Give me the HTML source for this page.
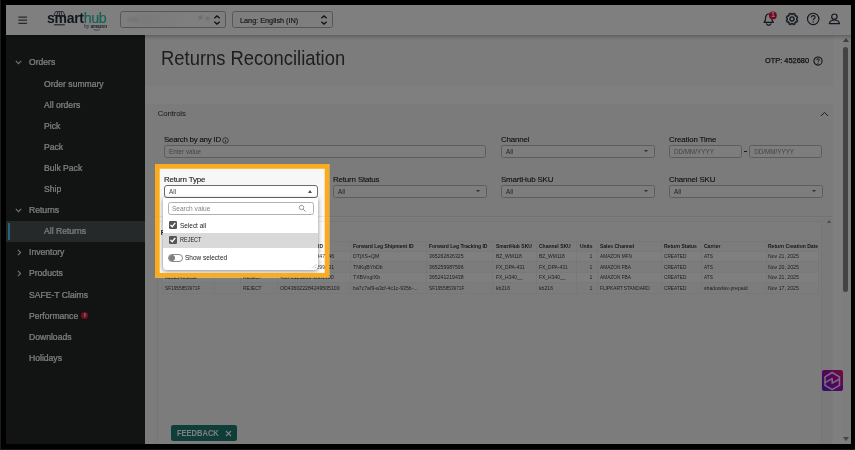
<!DOCTYPE html>
<html lang="en">
<head>
<meta charset="utf-8">
<title>Returns Reconciliation - SmartHub</title>
<style>
*{box-sizing:border-box;margin:0;padding:0}
html,body{width:855px;height:450px;background:#000;overflow:hidden}
body{position:relative;font-family:"Liberation Sans",sans-serif;color:#333;-webkit-font-smoothing:antialiased}
.screen{position:absolute;left:6px;top:5px;width:845px;height:439px;overflow:hidden;background:#fdfdfd}
.page{position:absolute;left:-6px;top:-5px;width:855px;height:450px;will-change:transform}
.abs{position:absolute}
.t{position:absolute;white-space:nowrap;line-height:1}

/* header */
.topbar{position:absolute;left:0;top:0;width:855px;height:34.5px;background:#fff;box-shadow:0 1px 4.500px rgba(0,0,0,.34);z-index:5}
.hsel{position:absolute;top:11px;height:17.3px;border:1px solid #adadad;border-radius:2.5px;background:#fdfdfd;overflow:hidden}
.hsel .t{font-size:7.5px;color:#2a2a2a;top:4.7px;left:6.2px;transform:scaleX(.97);transform-origin:0 50%;-webkit-text-stroke:.15px #2a2a2a}

/* sidebar */
.side{position:absolute;left:6px;top:34.5px;width:139px;height:410px;background:#252928;z-index:4}
.side .t{font-size:9.2px;color:#fbfbfb;transform:scaleX(.935);transform-origin:0 50%;margin-top:.1px;-webkit-text-stroke:.22px #fbfbfb}
.sel{position:absolute;left:0;top:186.7px;width:139px;height:20.5px;background:#4a5253}
.sel i{position:absolute;left:2px;top:1.6px;width:2.2px;height:16.8px;background:#46cdf5}

/* main */
.titlebar{position:absolute;left:145px;top:34.5px;width:697px;height:51.5px;background:#f8f8f8}
.h1{font-size:19.7px;color:#3c3c3c;left:161.4px;top:49.2px;transform:scaleX(.935);transform-origin:0 50%}
.card{position:absolute;background:#f5f5f5}
.lbl{font-size:7.9px;color:#262626;letter-spacing:-.14px;-webkit-text-stroke:.13px #262626}
.inp{position:absolute;height:12.4px;border:1px solid #b8b8b8;border-radius:2.5px;background:#fafafa}
.inp .t{font-size:6.3px;color:#444;left:4.4px;top:2.4px}
.inp .ph{color:#8a8a8a}
.arr{position:absolute;right:5.6px;top:4.1px;width:0;height:0;border-left:2.3px solid transparent;border-right:2.3px solid transparent;border-top:2.8px solid #555}

/* table */
.tbl{position:absolute;left:161.5px;top:240.6px;width:657px;height:53.3px;background:#f9f9f9;border:1px solid #f1f1f1}
.row{position:absolute;left:0;width:655px;height:10.55px}
.row{background:#f9f9f9;border-top:1px solid #f3f3f3}
.row.alt{background:#fff}
.td.uc{transform:scaleX(.85)}
.vl{position:absolute;top:0;width:1px;height:51px;background:#f1f1f1}
.th{font-size:5.6px;font-weight:bold;color:#2c2c2c;transform:scaleX(.895);transform-origin:0 50%}
.td{font-size:5.6px;color:#3c3c3c;transform:scaleX(.925);transform-origin:0 50%}

/* dropdown */
.dd{position:absolute;left:163.4px;top:198.4px;width:154.2px;height:71.4px;background:#fff;border-radius:0 0 4px 4px;box-shadow:0 1px 4px rgba(0,0,0,.45);z-index:8}
.cb{position:absolute;width:7.8px;height:7.6px;background:#555;border-radius:1.2px}
.cb svg{position:absolute;left:0;top:0}
.ddt{font-size:7.2px;color:#222;transform:scaleX(.895);transform-origin:0 50%}

/* spotlight */
.spot{position:absolute;left:155px;top:164px;width:174.4px;height:113.6px;border:4.7px solid #fbab1e;box-shadow:0 0 0 2000px rgba(0,0,0,.5);z-index:20;pointer-events:none}
</style>
</head>
<body>
<div class="abs" style="left:0;top:0;width:1px;height:450px;background:#1c1c1c"></div><div class="abs" style="left:0;top:449px;width:855px;height:1px;background:#191919"></div>
<div class="screen"><div class="page">

<!-- ===== top bar ===== -->
<div class="topbar">
  <svg class="abs" style="left:17.8px;top:15.6px" width="10" height="9" viewBox="0 0 10 9"><g stroke="#4b5260" stroke-width="1.25"><path d="M.4 1.1h8.7M.4 4.2h8.7M.4 7.3h8.7"/></g></svg>
  <!-- logo -->
  <div class="t" style="left:47px;top:11.200px;font-size:14px;font-weight:bold;color:#232f3e;letter-spacing:-.28px">smart</div>
  <div class="t" style="left:83.800px;top:11px;font-size:14.300px;color:#2cc4ac;letter-spacing:-.42px;-webkit-text-stroke:.2px #2cc4ac">hub</div>
  <svg class="abs" style="left:52px;top:9.500px" width="16" height="17" viewBox="0 0 16 17"><path d="M3.600 1.600h7.600l1.800 3.900H1.800zM5.700 1.600l-.8 3.900M9.100 1.600l.8 3.900M7.400 1.600v3.900" fill="none" stroke="#232f3e" stroke-width=".75" stroke-linejoin="round"/><path d="M2 14.800h10.800" stroke="#232f3e" stroke-width="1"/></svg>
  <div class="t" style="left:84.200px;top:24.800px;font-size:4.700px;color:#3a4352">by <b style="letter-spacing:-.150px">amazon</b></div>
  <svg class="abs" style="left:92.500px;top:28.900px" width="12" height="3" viewBox="0 0 12 3"><path d="M.5.400C2.500 1.500 5 1.500 6.800.5" fill="none" stroke="#3a4352" stroke-width=".6"/></svg>

  <div class="hsel" style="left:120.3px;width:105.6px">
    <div class="abs" style="left:3px;top:2px;width:86px;height:11px;background:linear-gradient(90deg,#fff,#f6f3f3 25%,#fbfbfb 55%,#fff 80%);filter:blur(1.200px)"></div>
    <div class="abs" style="left:72px;top:2.500px;width:17px;height:10px;border-radius:5px;background:#fff;box-shadow:0 0 3px 2px #fff;opacity:.9"></div>
    <div class="abs" style="left:6px;top:5.500px;width:11px;height:3.500px;background:#e6e6e6;filter:blur(1.400px)"></div>
    <div class="abs" style="left:78px;top:4px;width:3px;height:3px;background:#c4c4c4;filter:blur(1px)"></div>
    <div class="abs" style="left:84.500px;top:5px;width:3px;height:2.500px;background:#d0d0d0;filter:blur(1px)"></div>
    <svg class="abs" style="left:91.6px;top:2.9px" width="8" height="10" viewBox="0 0 8 10"><path d="M1.3 3.2L4 .9l2.7 2.3M1.3 6.8L4 9.1l2.7-2.3" fill="none" stroke="#222" stroke-width="1.300"/></svg>
  </div>
  <div class="hsel" style="left:232.4px;width:100.8px">
    <div class="t">Lang: English (IN)</div>
    <svg class="abs" style="left:86.7px;top:2.9px" width="8" height="10" viewBox="0 0 8 10"><path d="M1.3 3.2L4 .9l2.7 2.3M1.3 6.8L4 9.1l2.7-2.3" fill="none" stroke="#222" stroke-width="1.300"/></svg>
  </div>

  <!-- right icons -->
  <svg class="abs" style="left:761px;top:11px" width="18" height="16" viewBox="0 0 18 16"><g fill="none" stroke="#232f3e" stroke-width="1.200" stroke-linejoin="round" stroke-linecap="round"><path d="M3.100 11.300c1.200-1 1.500-2.200 1.500-4.200 0-2.400 1.300-4.100 3.100-4.100s3.100 1.700 3.100 4.100c0 2 .3 3.200 1.500 4.200z"/><path d="M5.600 12.900c.4.900 1.200 1.300 2.100 1.300s1.700-.4 2.100-1.300"/></g><circle cx="11.900" cy="4.400" r="3.900" fill="#e6143e"/></svg>
  <div class="t" style="left:771.200px;top:12.300px;font-size:6.300px;font-weight:bold;color:#fff">1</div>
  <svg class="abs" style="left:785.100px;top:12.100px" width="14" height="14" viewBox="0 0 14 14"><g fill="none" stroke="#232f3e" stroke-width="1.300" stroke-linejoin="round"><path d="M7.70 2.30L8.24 1.39L10.09 2.15L9.83 3.18L10.82 4.17L11.85 3.91L12.61 5.76L11.70 6.30L11.70 7.70L12.61 8.24L11.85 10.09L10.82 9.83L9.83 10.82L10.09 11.85L8.24 12.61L7.70 11.70L6.30 11.70L5.76 12.61L3.91 11.85L4.17 10.82L3.18 9.83L2.15 10.09L1.39 8.24L2.30 7.70L2.30 6.30L1.39 5.76L2.15 3.91L3.18 4.17L4.17 3.18L3.91 2.15L5.76 1.39L6.30 2.30Z"/><circle cx="7" cy="7" r="2.050"/></g></svg>
  <svg class="abs" style="left:806px;top:12px" width="14" height="14" viewBox="0 0 14 14"><circle cx="7.200" cy="6.900" r="5.700" fill="none" stroke="#232f3e" stroke-width="1.15"/><path d="M5.300 5.400c0-1.100.8-1.800 1.900-1.800s1.900.7 1.900 1.700c0 1.500-1.900 1.500-1.900 3" fill="none" stroke="#232f3e" stroke-width="1.1"/><circle cx="7.200" cy="10" r=".7" fill="#232f3e"/></svg>
  <svg class="abs" style="left:827px;top:12px" width="14" height="14" viewBox="0 0 14 14"><g fill="none" stroke="#232f3e" stroke-width="1.2" stroke-linejoin="round"><circle cx="7.400" cy="4.700" r="2.700"/><path d="M2.300 11.600c.5-2.400 2.600-3.600 5.100-3.600s4.600 1.200 5.100 3.600z"/></g></svg>
</div>

<!-- ===== sidebar ===== -->
<div class="side">
  <div class="sel"><i></i></div>
  <svg class="abs" style="left:9px;top:25.7px" width="7" height="5" viewBox="0 0 7 5"><path d="M.8.900L3.500 3.600 6.200.9" fill="none" stroke="#e8e8e8" stroke-width="1.100"/></svg>
  <div class="t" style="left:23.3px;top:23.9px">Orders</div>
  <div class="t" style="left:38px;top:45px">Order summary</div>
  <div class="t" style="left:38px;top:66.1px">All orders</div>
  <div class="t" style="left:38px;top:87.2px">Pick</div>
  <div class="t" style="left:38px;top:108.3px">Pack</div>
  <div class="t" style="left:38px;top:129.4px">Bulk Pack</div>
  <div class="t" style="left:38px;top:150.5px">Ship</div>
  <svg class="abs" style="left:9px;top:173.4px" width="7" height="5" viewBox="0 0 7 5"><path d="M.8.900L3.500 3.600 6.200.9" fill="none" stroke="#e8e8e8" stroke-width="1.100"/></svg>
  <div class="t" style="left:23.3px;top:171.6px">Returns</div>
  <div class="t" style="left:38px;top:192.7px">All Returns</div>
  <svg class="abs" style="left:10.500px;top:214.500px" width="5" height="7" viewBox="0 0 5 7"><path d="M.9.800L3.600 3.500.9 6.200" fill="none" stroke="#e8e8e8" stroke-width="1.100"/></svg>
  <div class="t" style="left:23.3px;top:213.800px">Inventory</div>
  <svg class="abs" style="left:10.500px;top:235.600px" width="5" height="7" viewBox="0 0 5 7"><path d="M.9.800L3.600 3.500.9 6.200" fill="none" stroke="#e8e8e8" stroke-width="1.100"/></svg>
  <div class="t" style="left:23.3px;top:234.900px">Products</div>
  <div class="t" style="left:23.3px;top:256px">SAFE-T Claims</div>
  <div class="t" style="left:23.3px;top:277.100px">Performance</div>
  <div class="abs" style="left:75.200px;top:277.600px;width:7px;height:7px;border-radius:50%;background:#e01d45"></div>
  <div class="t" style="left:77.900px;top:278.500px;font-size:5.500px;font-weight:bold;color:#fff">!</div>
  <div class="t" style="left:23.3px;top:298.200px">Downloads</div>
  <div class="t" style="left:23.3px;top:319.300px">Holidays</div>
</div>

<!-- ===== main ===== -->
<div class="abs" style="left:145px;top:34.5px;width:706px;height:410px;background:#f9f9f9"></div>
<div class="titlebar"></div>
<div class="abs" style="left:145px;top:86px;width:697px;height:17.600px;background:#fefefe"></div>
<div class="t h1">Returns Reconciliation</div>
<div class="t" style="left:765.300px;top:57.200px;font-size:7.800px;color:#222;-webkit-text-stroke:.25px #222;transform:scaleX(.95);transform-origin:0 50%">OTP: 452680</div>
<svg class="abs" style="left:812.600px;top:55.800px" width="10" height="10" viewBox="0 0 10 10"><circle cx="5" cy="5" r="4.100" fill="none" stroke="#222" stroke-width="1.050"/><path d="M3.700 4c0-.8.600-1.300 1.300-1.300s1.300.5 1.300 1.200c0 1-1.300 1-1.300 2" fill="none" stroke="#222" stroke-width=".95"/><circle cx="5" cy="7.300" r=".6" fill="#222"/></svg>

<!-- right scroll area -->
<div class="abs" style="left:832.500px;top:34.500px;width:9.500px;height:410px;background:#fefefe"></div>
<div class="abs" style="left:842px;top:34.500px;width:9px;height:410px;background:#fbfbfb"></div>
<div class="abs" style="left:843.300px;top:46.700px;width:5.100px;height:245.300px;border-radius:2.600px;background:#868686"></div>
<div class="abs" style="left:843px;top:37.900px;width:0;height:0;border-left:3px solid transparent;border-right:3px solid transparent;border-bottom:4.400px solid #7c7c7c;z-index:6"></div>
<div class="abs" style="left:843px;top:437.200px;width:0;height:0;border-left:3px solid transparent;border-right:3px solid transparent;border-top:4px solid #8a8a8a"></div>

<!-- controls card -->
<div class="card" style="left:153.300px;top:103.600px;width:679.200px;height:113.700px;background:#f7f7f7;border-bottom:1px solid #e4e4e4"></div>
<div class="t lbl" style="left:157.800px;top:109.600px;font-size:7.800px;-webkit-text-stroke:0;color:#303030">Controls</div>
<svg class="abs" style="left:819.800px;top:110.800px" width="9" height="6" viewBox="0 0 9 6"><path d="M.9 5L4.500 1.400 8.100 5" fill="none" stroke="#3a3a3a" stroke-width="1"/></svg>

<div class="t lbl" style="left:164px;top:135.800px;letter-spacing:-.23px">Search by any ID</div>
<svg class="abs" style="left:222.300px;top:136.600px" width="7" height="7" viewBox="0 0 7 7"><circle cx="3.500" cy="3.500" r="2.800" fill="none" stroke="#333" stroke-width=".7"/><path d="M3.500 3.100v2" stroke="#333" stroke-width=".8"/><circle cx="3.500" cy="2.100" r=".45" fill="#333"/></svg>
<div class="inp" style="left:163.700px;top:145.400px;width:322.800px"><div class="t ph">Enter value</div></div>

<div class="t lbl" style="left:501px;top:135.800px">Channel</div>
<div class="inp" style="left:500.600px;top:145.400px;width:154px"><div class="t">All</div><div class="arr"></div></div>

<div class="t lbl" style="left:669px;top:135.800px">Creation Time</div>
<div class="inp" style="left:668.600px;top:145.400px;width:73.700px"><div class="t ph">DD/MM/YYYY</div></div>
<div class="abs" style="left:744.400px;top:151.200px;width:3px;height:.9px;background:#333"></div>
<div class="inp" style="left:748.800px;top:145.400px;width:73.700px"><div class="t ph">DD/MM/YYYY</div></div>

<div class="t lbl" style="left:164px;top:175.600px">Return Type</div>
<div class="inp" style="left:163.700px;top:185.400px;width:154px;height:13px;background:#fff;border-color:#6a6a6a;border-radius:3px"><div class="t" style="top:2.700px">All</div><div class="arr" style="border-top:0;border-left-width:2.500px;border-right-width:2.500px;border-bottom:3.100px solid #505050;top:3.900px;right:5.200px"></div></div>

<div class="t lbl" style="left:333px;top:175.600px">Return Status</div>
<div class="inp" style="left:332.600px;top:185.400px;width:154px;height:12.900px"><div class="t">All</div><div class="arr"></div></div>

<div class="t lbl" style="left:501px;top:175.600px">SmartHub SKU</div>
<div class="inp" style="left:500.600px;top:185.400px;width:154px;height:12.900px"><div class="t">All</div><div class="arr"></div></div>

<div class="t lbl" style="left:669px;top:175.600px">Channel SKU</div>
<div class="inp" style="left:668.600px;top:185.400px;width:154px;height:12.900px"><div class="t">All</div><div class="arr"></div></div>

<!-- table card -->
<div class="card" style="left:153.300px;top:218.300px;width:679.200px;height:226px;background:#f7f7f7"></div>
<div class="card" style="left:157.300px;top:220.800px;width:665px;height:224px;background:#f9f9f9;border:1px solid #ececec;border-bottom:0"></div>
<div class="abs" style="left:822.300px;top:218.300px;width:10.200px;height:226px;background:#f4f4f4"></div>
<div class="abs" style="left:827.300px;top:219.700px;width:0;height:0;border-left:2.300px solid transparent;border-right:2.300px solid transparent;border-bottom:3.300px solid #999"></div>
<div class="t" style="left:160.700px;top:229.500px;font-size:6.600px;font-weight:bold;color:#222">Returns</div>

<div class="tbl">
  <div class="row alt" style="top:9.100px"></div>
  <div class="row" style="top:19.650px"></div>
  <div class="row alt" style="top:30.200px"></div>
  <div class="row" style="top:40.750px"></div>
  <div class="vl" style="left:51.600px"></div><div class="vl" style="left:77.600px"></div><div class="vl" style="left:114.300px"></div><div class="vl" style="left:187.800px"></div><div class="vl" style="left:263.400px"></div><div class="vl" style="left:329.500px"></div><div class="vl" style="left:373px"></div><div class="vl" style="left:413.400px"></div><div class="vl" style="left:434px"></div><div class="vl" style="left:498px"></div><div class="vl" style="left:538.500px"></div><div class="vl" style="left:603px"></div>
</div>
<!-- table text -->
<div class="t th" style="left:164.5px;top:243.95px">Return ID</div>
<div class="t th" style="left:216.5px;top:243.95px">Qty</div>
<div class="t th" style="left:242.9px;top:243.95px">Return Type</div>
<div class="t th" style="right:532.300px;transform-origin:100% 50%;top:243.95px">Customer Order ID</div>
<div class="t th" style="left:353.4px;top:243.95px">Forward Leg Shipment ID</div>
<div class="t th" style="left:429.2px;top:243.95px">Forward Leg Tracking ID</div>
<div class="t th" style="left:495.5px;top:243.95px">SmartHub SKU</div>
<div class="t th" style="left:539.0px;top:243.95px">Channel SKU</div>
<div class="t th" style="left:580.0px;top:243.95px">Units</div>
<div class="t th" style="left:599.8px;top:243.95px">Sales Channel</div>
<div class="t th" style="left:663.9px;top:243.95px">Return Status</div>
<div class="t th" style="left:704.3px;top:243.95px">Carrier</div>
<div class="t th" style="left:768.1px;top:243.95px">Return Creation Date</div>
<div class="t td" style="left:164.5px;top:254.01px">82531907462</div>
<div class="t td uc" style="left:242.9px;top:254.01px">REJECT</div>
<div class="t td" style="left:279.8px;top:254.01px;transform:scaleX(.957)">408-7261945-3847146</div>
<div class="t td" style="left:353.4px;top:254.01px">DTjXS+QM</div>
<div class="t td" style="left:429.2px;top:254.01px">365262826325</div>
<div class="t td" style="left:495.5px;top:254.01px;transform:scaleX(.885)">BZ_WM118</div>
<div class="t td" style="left:539.0px;top:254.01px;transform:scaleX(.885)">BZ_WM118</div>
<div class="t td" style="left:580.0px;width:12.3px;text-align:right;transform-origin:100% 50%;top:254.01px">1</div>
<div class="t td uc" style="left:599.8px;top:254.01px">AMAZON MFN</div>
<div class="t td uc" style="left:663.9px;top:254.01px">CREATED</div>
<div class="t td uc" style="left:704.3px;top:254.01px">ATS</div>
<div class="t td" style="left:768.1px;top:254.01px">Nov 21, 2025</div>
<div class="t td" style="left:164.5px;top:264.61px">82528816074</div>
<div class="t td uc" style="left:242.9px;top:264.61px">REJECT</div>
<div class="t td" style="left:279.8px;top:264.61px;transform:scaleX(.957)">171-5820364-1299531</div>
<div class="t td" style="left:353.4px;top:264.61px">TNKqBYhDb</div>
<div class="t td" style="left:429.2px;top:264.61px">365259987596</div>
<div class="t td" style="left:495.5px;top:264.61px;transform:scaleX(.885)">FX_DPA-431</div>
<div class="t td" style="left:539.0px;top:264.61px;transform:scaleX(.885)">FX_DPA-431</div>
<div class="t td" style="left:580.0px;width:12.3px;text-align:right;transform-origin:100% 50%;top:264.61px">1</div>
<div class="t td uc" style="left:599.8px;top:264.61px">AMAZON FBA</div>
<div class="t td uc" style="left:663.9px;top:264.61px">CREATED</div>
<div class="t td uc" style="left:704.3px;top:264.61px">ATS</div>
<div class="t td" style="left:768.1px;top:264.61px">Nov 20, 2025</div>
<div class="t td" style="left:164.5px;top:275.21px">82525435658</div>
<div class="t td uc" style="left:242.9px;top:275.21px">REJECT</div>
<div class="t td" style="left:279.8px;top:275.21px;transform:scaleX(.957)">408-3115283-3881300</div>
<div class="t td" style="left:353.4px;top:275.21px">TXBVngIXb</div>
<div class="t td" style="left:429.2px;top:275.21px">365241219438</div>
<div class="t td" style="left:495.5px;top:275.21px;transform:scaleX(.885)">FX_H340__</div>
<div class="t td" style="left:539.0px;top:275.21px;transform:scaleX(.885)">FX_H340__</div>
<div class="t td" style="left:580.0px;width:12.3px;text-align:right;transform-origin:100% 50%;top:275.21px">1</div>
<div class="t td uc" style="left:599.8px;top:275.21px">AMAZON FBA</div>
<div class="t td uc" style="left:663.9px;top:275.21px">CREATED</div>
<div class="t td uc" style="left:704.3px;top:275.21px">ATS</div>
<div class="t td" style="left:768.1px;top:275.21px">Nov 21, 2025</div>
<div class="t td uc" style="left:164.5px;top:285.71px">SF1955853971F</div>
<div class="t td uc" style="left:242.9px;top:285.71px">REJECT</div>
<div class="t td" style="left:279.8px;top:285.71px">OD436022284249505100</div>
<div class="t td" style="left:353.4px;top:285.71px">ba7c7af9-a3cf-4c1c-935b-...</div>
<div class="t td uc" style="left:429.2px;top:285.71px">SF1955853971F</div>
<div class="t td" style="left:495.5px;top:285.71px">kb216</div>
<div class="t td" style="left:539.0px;top:285.71px">kb216</div>
<div class="t td" style="left:580.0px;width:12.3px;text-align:right;transform-origin:100% 50%;top:285.71px">1</div>
<div class="t td uc" style="left:599.8px;top:285.71px">FLIPKART STANDARD</div>
<div class="t td uc" style="left:663.9px;top:285.71px">CREATED</div>
<div class="t td" style="left:704.3px;top:285.71px">shadowfax-prepaid</div>
<div class="t td" style="left:768.1px;top:285.71px">Nov 17, 2025</div>

<!-- feedback + assistant -->
<div class="abs" style="left:171.400px;top:424.700px;width:66px;height:16.400px;border-radius:2.200px;background:#1e7a74"></div>
<div class="t" style="left:177.200px;top:428.900px;font-size:8.700px;font-weight:bold;color:#fff;transform:scaleX(.865);transform-origin:0 50%">FEEDBACK</div>
<svg class="abs" style="left:225px;top:430px" width="7" height="7" viewBox="0 0 7 7"><path d="M1 1l5 5M6 1L1 6" stroke="#fff" stroke-width="1.100"/></svg>
<div class="abs" style="left:822px;top:370px;width:21px;height:20.800px;border-radius:2px;background:linear-gradient(45deg,#5a22e0 0%,#a20cc0 48%,#b80ea8 70%,#f02070 100%)"></div>
<svg class="abs" style="left:822.200px;top:369.800px" width="21" height="21" viewBox="0 0 21 21"><g fill="none" stroke="#fde4f6" stroke-opacity=".95" stroke-width="1.550" stroke-linejoin="round"><path d="M10.200 2.500l7.300 4.400v8.500l-7.300 4.200-7.200-4.200V6.900z"/><path d="M3 12.700l7.200-4.100v4.600l7.300-4.200"/></g></svg>

<!-- dropdown -->
<div class="dd">
  <div class="abs" style="left:4.900px;top:3.900px;width:145.600px;height:12.400px;border:1px solid #b0b0b0;border-radius:2.500px;background:#fff"></div>
  <div class="t" style="left:8.500px;top:7.600px;font-size:6.600px;color:#858585">Search value</div>
  <svg class="abs" style="left:135px;top:6px" width="9" height="9" viewBox="0 0 9 9"><circle cx="3.500" cy="3.500" r="2.200" fill="none" stroke="#888" stroke-width=".85"/><path d="M5.200 5.200l2.300 2.300" stroke="#888" stroke-width=".95"/></svg>
  <div class="abs" style="left:0;top:34.500px;width:154.200px;height:14.900px;background:#d9d9d9"></div>
  <div class="cb" style="left:5.700px;top:22.900px"><svg width="7.600" height="7.600" viewBox="0 0 8 8"><path d="M1.500 4.100l1.900 1.900 3.200-4" fill="none" stroke="#fff" stroke-width="1.400"/></svg></div>
  <div class="t ddt" style="left:17.100px;top:23.300px">Select all</div>
  <div class="cb" style="left:5.700px;top:38px"><svg width="7.600" height="7.600" viewBox="0 0 8 8"><path d="M1.500 4.100l1.900 1.900 3.200-4" fill="none" stroke="#fff" stroke-width="1.400"/></svg></div>
  <div class="t ddt" style="left:17.100px;top:38.300px;font-size:6.900px;transform:scaleX(.8)">REJECT</div>
  <div class="abs" style="left:4.900px;top:55.200px;width:14.400px;height:8.200px;border:1px solid #8a8a8a;border-radius:4.100px;background:#fff"></div>
  <div class="abs" style="left:6.100px;top:56.400px;width:5.800px;height:5.800px;border-radius:50%;background:#7e7e7e"></div>
  <div class="t ddt" style="left:21.800px;top:55.700px;transform:scaleX(.9)">Show selected</div>
  <svg class="abs" style="left:146.500px;top:63.800px" width="7" height="7" viewBox="0 0 7 7"><path d="M2 6.500l4.500-4.500M4.500 6.500l2-2" stroke="#a8a8a8" stroke-width=".6"/></svg>
</div>

<svg class="abs" style="left:0;top:0;z-index:20" width="855" height="450" viewBox="0 0 855 450"><path fill="#000" fill-opacity=".5" fill-rule="evenodd" d="M0 0H855V450H0ZM155 164H329.300V277.500H155Z"/><path fill="#fbab1e" fill-rule="evenodd" d="M155 164H329.300V277.500H155ZM159.700 168.700H324.700V273H159.700Z"/></svg>

</div></div>
</body>
</html>
